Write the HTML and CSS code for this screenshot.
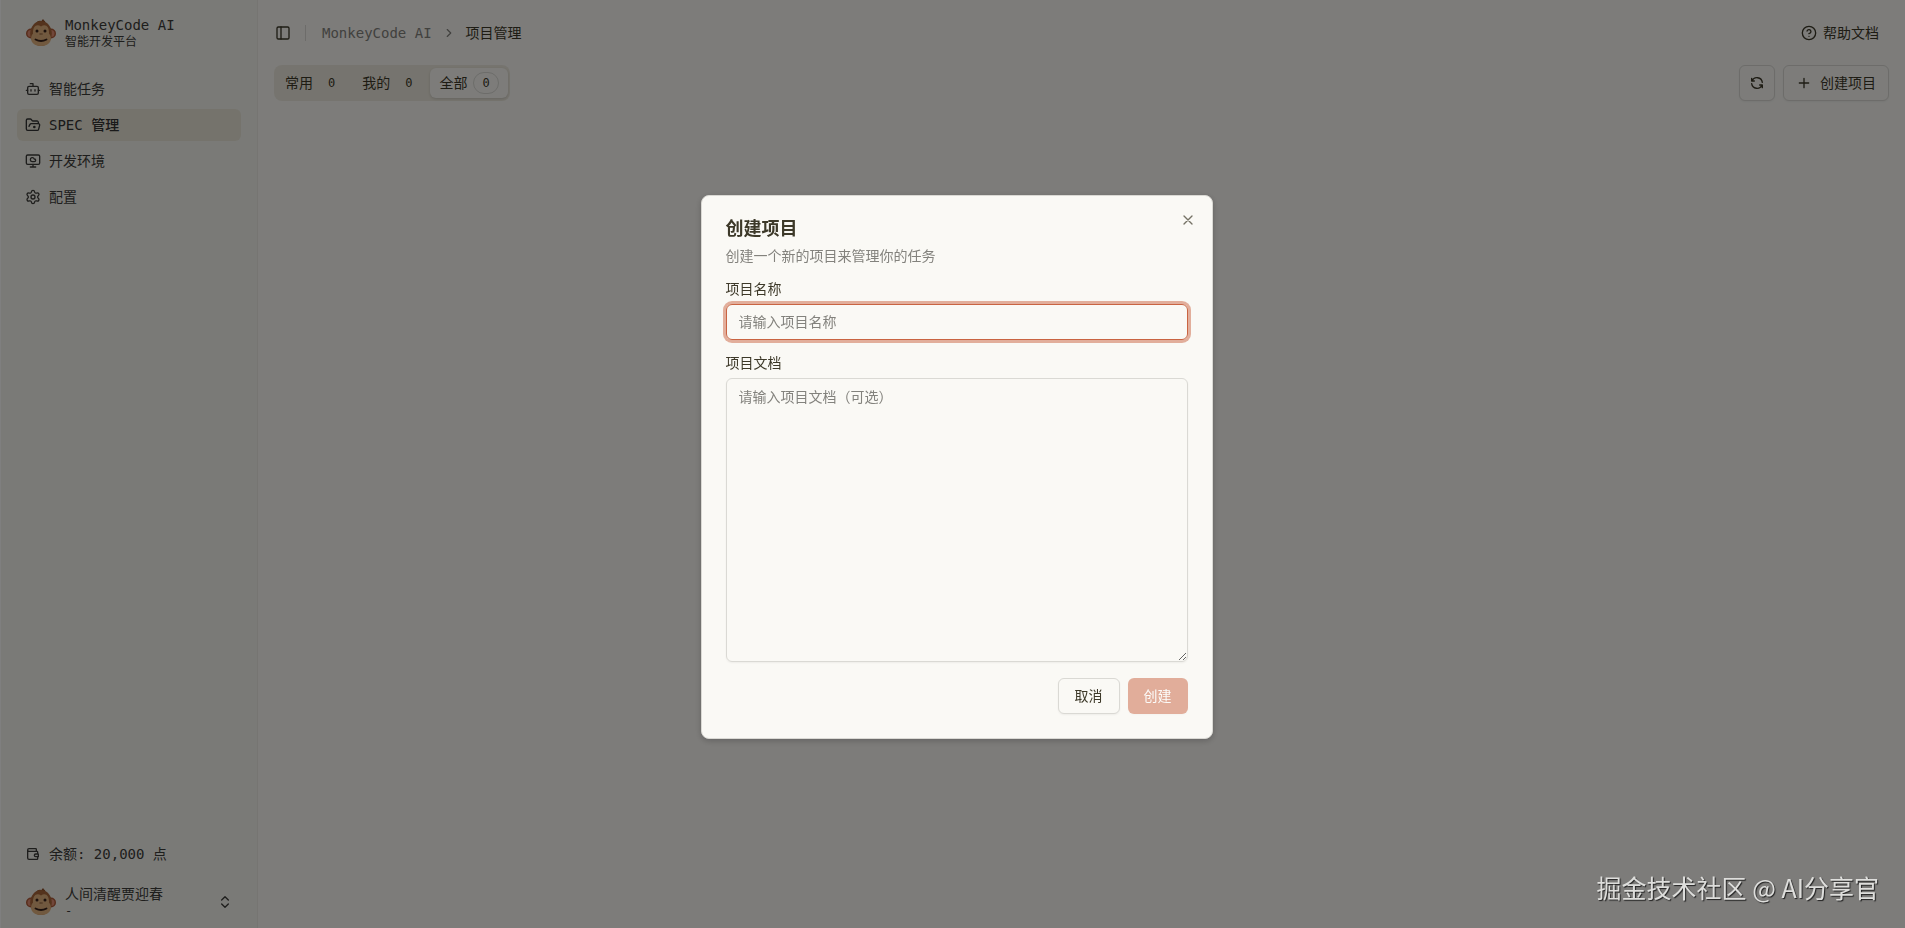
FILE: index.html
```
<!DOCTYPE html>
<html lang="zh-CN">
<head>
<meta charset="utf-8">
<title>项目管理 - MonkeyCode AI</title>
<link rel="stylesheet" href="styles.css">
</head>
<body>
<svg class="defs" aria-hidden="true">
  <symbol id="monkey" viewBox="0 0 32 30">
    <path d="M11 5Q13 2 16.500 3Q18 0 19 2.500Q21 3 20 6Z" fill="#8c4f2a"/>
    <circle cx="6" cy="15.500" r="5" fill="#b05a38"/><circle cx="26" cy="15.500" r="5" fill="#b05a38"/>
    <circle cx="6" cy="15.500" r="3.500" fill="#e38f74"/><circle cx="26" cy="15.500" r="3.500" fill="#e38f74"/>
    <ellipse cx="16" cy="15.500" rx="10.800" ry="12.500" fill="#a8673a"/>
    <path d="M16 8.500C11.500 5 7.500 9 8 15.500C4 20 6 28 16 28S28 20 24 15.500C24.500 9 20.500 5 16 8.500Z" fill="#e2b27e"/>
    <circle cx="12" cy="13" r="1.500" fill="#38221a"/><circle cx="20" cy="13" r="1.500" fill="#38221a"/>
    <path d="M15 16h.4M16.700 16h.4" stroke="#6b3d22" stroke-linecap="round"/>
    <path d="M10.500 21.500Q16 24.500 21.500 21.500" fill="none" stroke="#38221a" stroke-width="1.800" stroke-linecap="round"/>
  </symbol>
</svg>
<div class="app">
  <aside class="sidebar">
    <div class="profile">
      <svg class="monkey" aria-hidden="true"><use href="#monkey"/></svg>
      <div class="profile-text"><span class="brand">MonkeyCode AI</span><span class="sub">智能开发平台</span></div>
    </div>
    <nav class="menu">
      <a href="#" class="item"><svg class="icon" viewBox="0 0 24 24"><path d="M12 8V4H8"/><rect width="16" height="12" x="4" y="8" rx="2"/><path d="M2 14h2M20 14h2M15 13v2M9 13v2"/></svg>智能任务</a>
      <a href="#" class="item active" aria-current="page"><svg class="icon" viewBox="0 0 24 24"><path d="m6 14 1.450-2.900A2 2 0 0 1 9.240 10H20a2 2 0 0 1 1.940 2.500l-1.550 6a2 2 0 0 1-1.940 1.500H4a2 2 0 0 1-2-2V5c0-1.100.9-2 2-2h3.930a2 2 0 0 1 1.660.9l.82 1.200a2 2 0 0 0 1.660.9H18a2 2 0 0 1 2 2v2"/><circle cx="14" cy="15" r="1"/></svg>SPEC 管理</a>
      <a href="#" class="item"><svg class="icon" viewBox="0 0 24 24"><path d="M11 13a3 3 0 1 1 2.830-4H14a2 2 0 0 1 0 4zM12 17v4M8 21h8"/><rect x="2" y="3" width="20" height="14" rx="2"/></svg>开发环境</a>
      <a href="#" class="item"><svg class="icon" viewBox="0 0 24 24"><path d="M9.671 4.136a2.340 2.340 0 0 1 4.659 0 2.340 2.340 0 0 0 3.319 1.915 2.340 2.340 0 0 1 2.330 4.033 2.340 2.340 0 0 0 0 3.831 2.340 2.340 0 0 1-2.330 4.033 2.340 2.340 0 0 0-3.319 1.915 2.340 2.340 0 0 1-4.659 0 2.340 2.340 0 0 0-3.320-1.915 2.340 2.340 0 0 1-2.330-4.033 2.340 2.340 0 0 0 0-3.831A2.340 2.340 0 0 1 6.350 6.051a2.340 2.340 0 0 0 3.319-1.915"/><circle cx="12" cy="12" r="3"/></svg>配置</a>
    </nav>
    <div class="footer">
      <a href="#" class="item"><svg class="icon" viewBox="0 0 24 24"><path d="M17 8v-3a1 1 0 0 0-1-1h-10a2 2 0 0 0 0 4h12a1 1 0 0 1 1 1v3m0 4v3a1 1 0 0 1-1 1h-12a2 2 0 0 1-2-2v-12M20 12v4h-4a2 2 0 0 1 0-4h4"/></svg>余额: 20,000 点</a>
      <button type="button" class="profile user">
        <svg class="monkey" aria-hidden="true"><use href="#monkey"/></svg>
        <span class="profile-text"><span class="brand">人间清醒贾迎春</span><span class="sub">-</span></span>
        <svg class="icon" viewBox="0 0 24 24"><path d="m7 15 5 5 5-5M7 9l5-5 5 5"/></svg>
      </button>
    </div>
  </aside>
  <main class="main">
    <header class="topbar">
      <button type="button" class="plain" aria-label="切换侧边栏"><svg class="icon" viewBox="0 0 24 24"><rect width="18" height="18" x="3" y="3" rx="2"/><path d="M9 3v18"/></svg></button>
      <span class="divider"></span>
      <nav class="crumbs"><a href="#">MonkeyCode AI</a><svg class="icon small" viewBox="0 0 24 24"><path d="m9 18 6-6-6-6"/></svg><span>项目管理</span></nav>
      <a href="#" class="help"><svg class="icon" viewBox="0 0 24 24"><circle cx="12" cy="12" r="10"/><path d="M9.090 9a3 3 0 0 1 5.830 1c0 2-3 3-3 3M12 17h.01"/></svg>帮助文档</a>
    </header>
    <div class="toolbar">
      <div class="tabs" role="tablist">
        <button type="button" role="tab" class="tab">常用<span class="badge">0</span></button>
        <button type="button" role="tab" class="tab">我的<span class="badge">0</span></button>
        <button type="button" role="tab" class="tab selected" aria-selected="true">全部<span class="badge">0</span></button>
      </div>
      <div class="actions">
        <button type="button" class="btn square" aria-label="刷新"><svg class="icon" viewBox="0 0 24 24"><path d="M20 11a8.100 8.100 0 0 0-15.500-2m-.5-4v4h4M4 13a8.100 8.100 0 0 0 15.500 2m.5 4v-4h-4"/></svg></button>
        <button type="button" class="btn create"><svg class="icon" viewBox="0 0 24 24"><path d="M5 12h14M12 5v14"/></svg>创建项目</button>
      </div>
    </div>
  </main>
</div>
<div class="overlay">
  <form class="dialog" role="dialog" aria-modal="true" aria-labelledby="dialog-title">
    <button type="button" class="close" aria-label="关闭"><svg class="icon" viewBox="0 0 24 24"><path d="M18 6 6 18M6 6l12 12"/></svg></button>
    <div class="heading"><h2 id="dialog-title">创建项目</h2><p>创建一个新的项目来管理你的任务</p></div>
    <div class="field"><label for="name">项目名称</label><input id="name" type="text" placeholder="请输入项目名称" autofocus></div>
    <div class="field"><label for="doc">项目文档</label><textarea id="doc" placeholder="请输入项目文档（可选）"></textarea></div>
    <div class="buttons"><button type="button" class="btn">取消</button><button type="submit" class="btn primary" disabled>创建</button></div>
  </form>
</div>
<div class="watermark">掘金技术社区 @ AI分享官</div>
</body>
</html>
```
FILE: styles.css
```
:root {
  --bg: #faf9f5;
  --fg: #3d3929;
  --muted: #83827d;
  --border: #dad9d4;
  --accent: #eae7d9;
  --primary: #c96442;
}
* { box-sizing: border-box; }
body {
  margin: 0;
  background: var(--bg);
  color: var(--fg);
  font: 14px/20px "DejaVu Sans Mono", "Noto Sans CJK SC", monospace;
}
button, input, textarea { font: inherit; color: inherit; }
button { border: 0; padding: 0; background: none; }
a { color: inherit; text-decoration: none; }
h2, p { margin: 0; }
.defs { position: absolute; width: 0; height: 0; }
.icon {
  width: 16px;
  height: 16px;
  flex: none;
  fill: none;
  stroke: currentColor;
  stroke-width: 2;
  stroke-linecap: round;
  stroke-linejoin: round;
}
.icon.small { width: 14px; height: 14px; }
.app { display: flex; min-height: 100vh; }
.sidebar {
  display: flex;
  flex-direction: column;
  width: 258px;
  flex: none;
  padding: 9px 16px 2px;
  border-left: 1px solid #fff;
  border-right: 1px solid #ecebe5;
  background: #f5f4ee;
  color: #3d3d3a;
}
.profile {
  display: flex;
  align-items: center;
  gap: 8px;
  height: 48px;
  padding: 0 8px;
  text-align: left;
}
.monkey { width: 32px; height: 30px; flex: none; }
.profile-text { display: flex; flex: 1; flex-direction: column; }
.brand { line-height: 18px; }
.sub { font-size: 12px; line-height: 16px; }
.menu { display: flex; flex-direction: column; gap: 4px; margin-top: 16px; }
.item {
  display: flex;
  align-items: center;
  gap: 8px;
  height: 32px;
  padding: 0 8px;
  border-radius: 6px;
}
.item.active { background: var(--accent); color: #343434; font-weight: 500; }
.footer { display: flex; flex-direction: column; gap: 8px; margin-top: auto; }
.main { flex: 1; padding: 0 16px; }
.topbar { display: flex; align-items: center; height: 65px; padding: 0 10px 0 1px; }
.plain { display: flex; }
.divider { width: 1px; height: 16px; margin: 0 16px 0 14px; background: var(--border); }
.crumbs { display: flex; align-items: center; gap: 10px; }
.crumbs a, .crumbs .icon { color: var(--muted); }
.help { display: flex; align-items: center; gap: 6px; margin-left: auto; }
.toolbar { display: flex; justify-content: space-between; }
.tabs { display: flex; height: 36px; padding: 3px 2px; border-radius: 8px; background: #ede9de; }
.tab {
  display: flex;
  align-items: center;
  gap: 6px;
  padding: 0 8px;
  border: 1px solid transparent;
  border-radius: 6px;
}
.tab.selected { background: var(--bg); box-shadow: 0 1px 3px rgb(0 0 0 / 15%); }
.badge {
  padding: 2px 8px;
  border: 1px solid transparent;
  border-radius: 11px;
  font-size: 12px;
  line-height: 16px;
}
.selected .badge { border-color: var(--border); }
.actions { display: flex; gap: 8px; }
.btn {
  display: flex;
  align-items: center;
  justify-content: center;
  height: 36px;
  padding: 0 16px;
  border: 1px solid var(--border);
  border-radius: 6px;
  background: var(--bg);
  box-shadow: 0 1px 2px rgb(0 0 0 / 5%);
}
.btn.square { width: 36px; padding: 0; }
.btn.create { gap: 8px; padding: 0 12px; }
.overlay {
  position: fixed;
  inset: 0;
  display: flex;
  align-items: center;
  justify-content: center;
  padding: 6px 0 0 8px;
  background: rgb(0 0 0 / 50%);
}
.dialog {
  position: relative;
  display: flex;
  flex-direction: column;
  gap: 16px;
  width: 100%;
  max-width: 512px;
  padding: 24px;
  border: 1px solid var(--border);
  border-radius: 8px;
  background: var(--bg);
  box-shadow: 0 2px 6px rgb(0 0 0 / 20%);
}
.close { position: absolute; top: 16px; right: 16px; display: flex; opacity: .7; }
.heading { display: flex; flex-direction: column; gap: 8px; }
.heading h2 { font-size: 18px; line-height: 18px; font-weight: 700; }
.heading p { color: var(--muted); }
.field { display: flex; flex-direction: column; gap: 8px; }
.field label { line-height: 14px; }
.field input, .field textarea {
  width: 100%;
  padding: 0 12px;
  border: 1px solid var(--border);
  border-radius: 6px;
  background: transparent;
  outline: 0;
  box-shadow: 0 1px 2px rgb(0 0 0 / 5%);
}
.field input { height: 36px; }
.field textarea { height: 284px; padding: 8px 12px; resize: vertical; }
.field input:focus { border-color: var(--primary); box-shadow: 0 0 0 3px rgb(201 100 66 / 50%); }
.field ::placeholder { color: var(--muted); opacity: 1; }
.buttons { display: flex; justify-content: flex-end; gap: 8px; }
.btn.primary { border: 0; background: var(--primary); color: #fff; opacity: .5; }
.watermark {
  position: fixed;
  right: 26px;
  bottom: 23px;
  color: #dededc;
  font: 25px/36px "Noto Sans CJK SC", sans-serif;
  text-shadow: 1px 1px 1px #222;
}
```
